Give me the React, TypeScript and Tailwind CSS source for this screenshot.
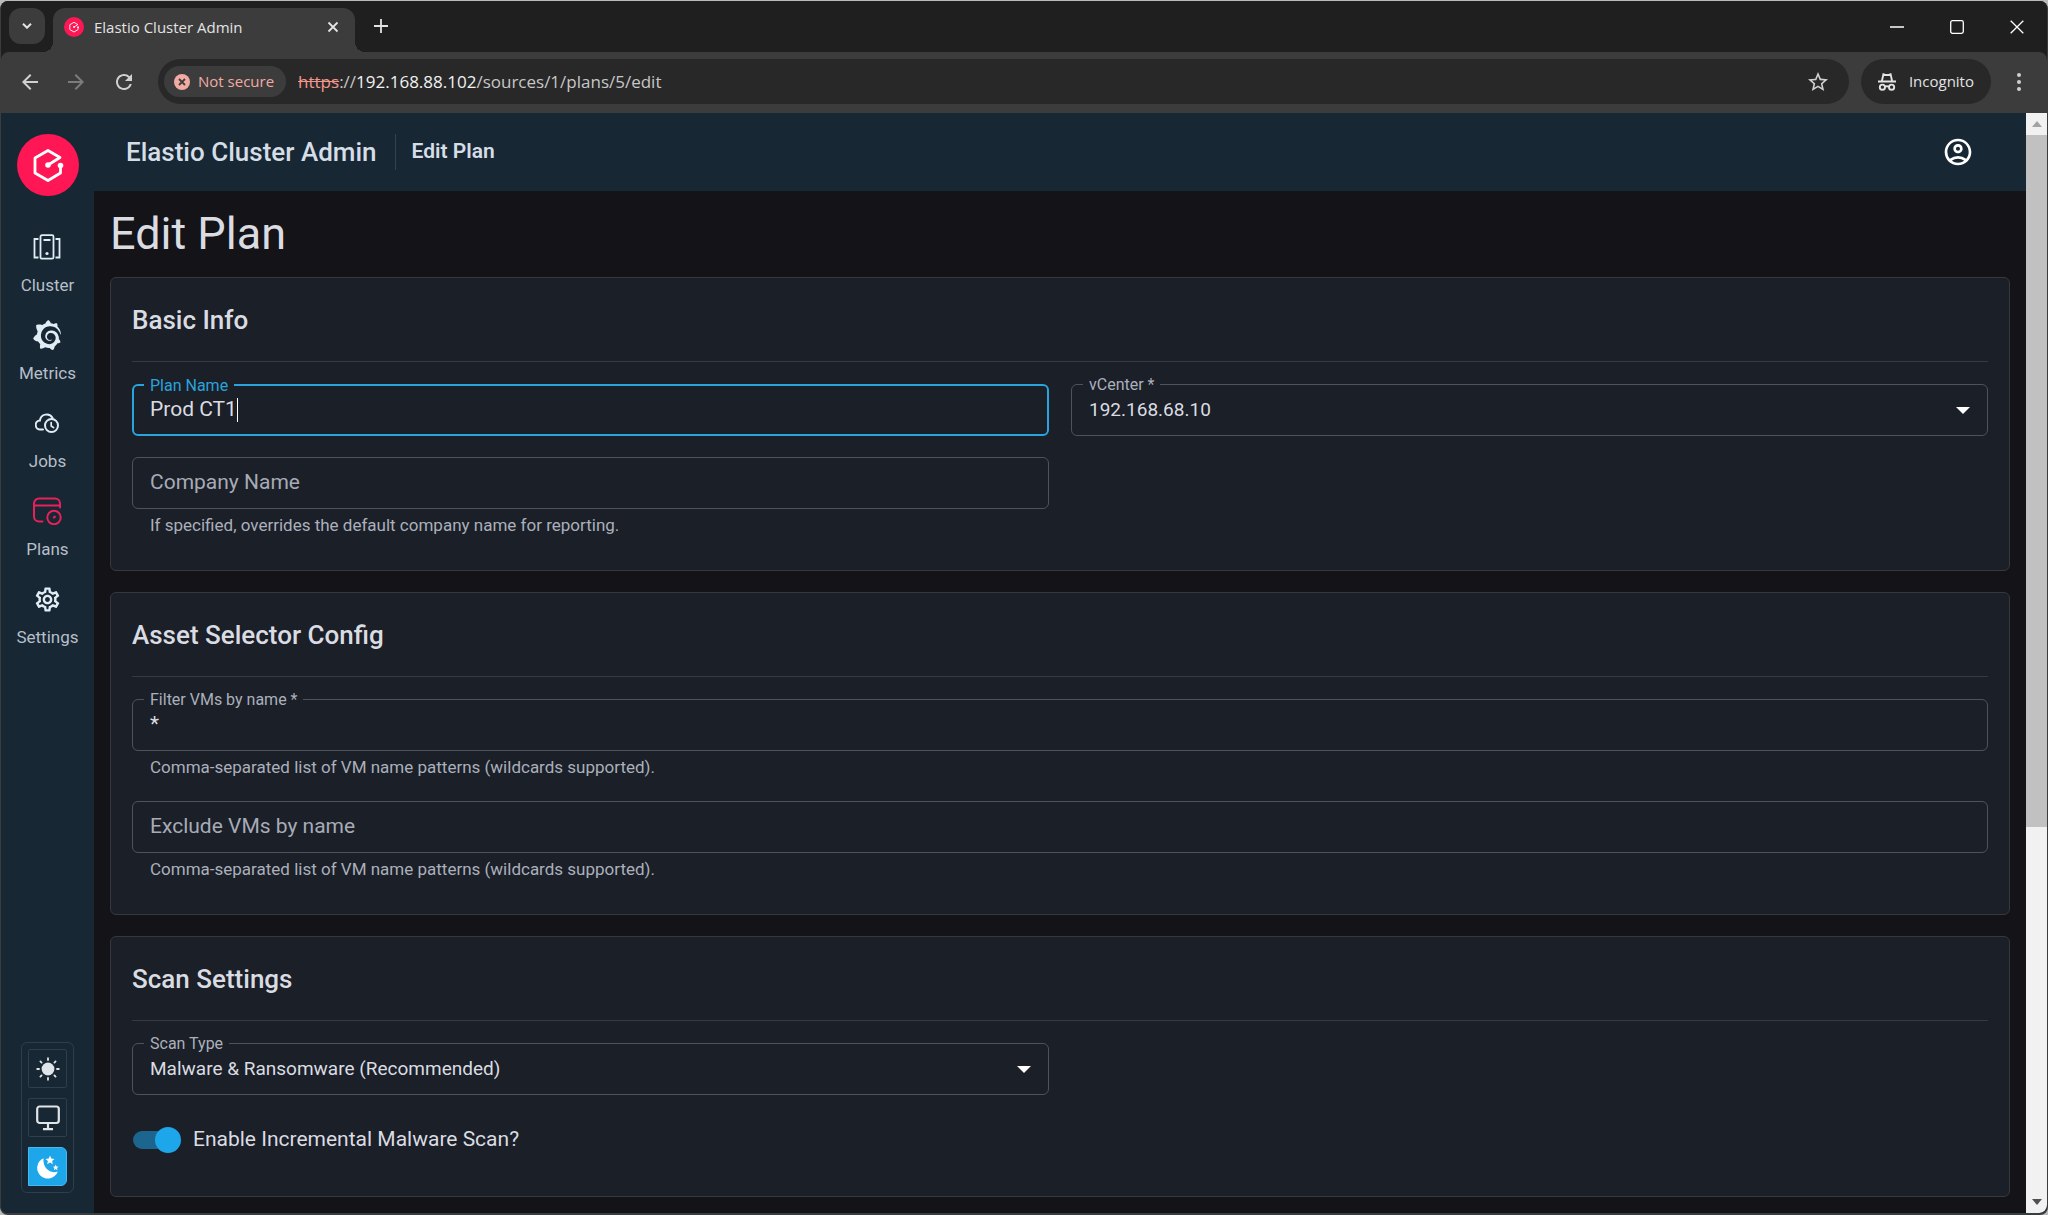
import React, { useState } from 'react';
import { MdArrowBack, MdArrowForward, MdOutlineAccountCircle, MdOutlineSettings, MdRefresh, MdStarOutline } from 'react-icons/md';
import { SiGrafana } from 'react-icons/si';

const LogoMark: React.FC<{ className?: string }> = ({ className }) => (
  <svg viewBox="0 0 62 62" className={className} fill="none" aria-hidden="true">
    <circle cx="31" cy="31" r="31" fill="#ff1654" />
    <path d="M31 31 L43 23.5 L31 16.5 L18 24 V39 L31 46.5 L43.5 39 V31.5" stroke="white" strokeWidth="2.8" strokeLinejoin="round" />
    <circle cx="31" cy="31" r="2.8" fill="white" />
    <circle cx="43.5" cy="31.5" r="2.8" fill="white" />
  </svg>
);

const ClusterIcon = () => (
  <svg viewBox="0 0 28 26" className="h-[26px] w-7" fill="none" stroke="currentColor" strokeWidth="1.8">
    <rect x="7.5" y="1.2" width="13" height="23.5" rx="1.5" />
    <path d="M10.5 6h7M5.5 5H1.5v18.5H5.5M22.5 5h4v18.5h-4" />
    <circle cx="14" cy="19.5" r="1.6" fill="currentColor" stroke="none" />
  </svg>
);

const JobsIcon = () => (
  <svg viewBox="0 0 24 20" className="h-5 w-6" fill="none" stroke="currentColor" strokeWidth="2" strokeLinecap="round">
    <path d="M8 16.5H5.5a4.5 4.5 0 0 1-.6-9A6.8 6.8 0 0 1 17.6 5" />
    <circle cx="16.5" cy="12.5" r="6.5" />
    <path d="M16.2 9.5v3.5l2.4 1.6" strokeWidth="1.7" />
  </svg>
);

const PlansIcon = () => (
  <svg viewBox="0 0 30 28" className="h-7 w-[30px]" fill="none" stroke="currentColor" strokeWidth="2" strokeLinecap="round">
    <path d="M10.5 24.5H7a5 5 0 0 1-5-5V6.5a5 5 0 0 1 5-5h16a5 5 0 0 1 5 5v4M2 8.5h26" />
    <circle cx="22" cy="20.5" r="6.7" />
    <path d="M22 20.5l.8-.8" strokeWidth="2.2" />
  </svg>
);

const SunIcon = () => (
  <svg viewBox="0 0 24 24" className="size-6" stroke="currentColor" strokeWidth="1.8" strokeLinecap="round">
    <circle cx="12" cy="12" r="6.4" fill="currentColor" stroke="none" />
    <path d="M12 1.2v1.8M12 21v1.8M1.2 12H3M21 12h1.8M4.4 4.4l1.2 1.2M18.4 18.4l1.2 1.2M4.4 19.6l1.2-1.2M18.4 5.6l1.2-1.2" />
  </svg>
);

const MonitorIcon = () => (
  <svg viewBox="0 0 24 26" className="h-[26px] w-6" fill="none" stroke="currentColor" strokeWidth="2.2">
    <rect x="1.2" y="1.5" width="21.6" height="16.5" rx="2.5" />
    <path d="M12 18v6M7 24.2h10" />
  </svg>
);

const MoonIcon = () => (
  <svg viewBox="0 0 24 24" className="size-6" fill="currentColor">
    <path d="M7.6 3.2A10.6 10.6 0 1 0 21.8 16.4C14 19.5 6.2 12.5 7.6 3.2Z" />
    <path d="M14 .6l1.3 3 3.2.3-2.4 2.2.7 3.2-2.8-1.7-2.8 1.7.7-3.2L9.5 3.9l3.2-.3Z" />
    <path d="M19.7 9.6l.8 1.9 2.1.2-1.6 1.4.5 2.1-1.8-1.1-1.8 1.1.5-2.1-1.6-1.4 2.1-.2Z" />
  </svg>
);

const IncognitoIcon = () => (
  <svg viewBox="0 0 20 20" className="size-5" fill="none" stroke="#e3e3e3" strokeWidth="1.9">
    <path d="M1 9.5h18M4.8 9.5l1.6-7.2 1.8.7h3.6l1.8-.7 1.6 7.2" />
    <circle cx="5.4" cy="15.2" r="2.6" />
    <circle cx="14.6" cy="15.2" r="2.6" />
    <path d="M8 14.8q2-1.2 4 0" />
  </svg>
);

const NAV_ITEMS = [
  { label: 'Cluster', icon: <ClusterIcon /> },
  { label: 'Metrics', icon: <SiGrafana size={30} /> },
  { label: 'Jobs', icon: <JobsIcon /> },
  { label: 'Plans', icon: <PlansIcon />, active: true },
  { label: 'Settings', icon: <MdOutlineSettings size={29} /> },
];

const THEMES = [
  { id: 'light', label: 'Light theme', icon: <SunIcon /> },
  { id: 'system', label: 'System theme', icon: <MonitorIcon /> },
  { id: 'dark', label: 'Dark theme', icon: <MoonIcon /> },
];

const TabStrip = () => (
  <div className="flex h-[51px] shrink-0 items-end bg-[#1f1f1f] pl-2 text-[#e3e3e3]">
    <button aria-label="Search tabs" className="mb-2 flex size-9 items-center justify-center rounded-xl bg-[#3c3c3c]">
      <svg viewBox="0 0 10 6" className="h-1.5 w-2.5" fill="none" stroke="currentColor" strokeWidth="2"><path d="M1 .7l4 4 4-4" /></svg>
    </button>
    <div className="relative ml-2 flex h-11 w-[302px] items-center rounded-t-xl bg-[#3c3c3c] pb-1.5 pl-[11px] pr-3 before:absolute before:bottom-0 before:-left-2.5 before:size-2.5 before:bg-[radial-gradient(circle_at_0_0,transparent_10px,#3c3c3c_10px)] after:absolute after:bottom-0 after:-right-2.5 after:size-2.5 after:bg-[radial-gradient(circle_at_100%_0,transparent_10px,#3c3c3c_10px)]">
      <LogoMark className="size-5" />
      <span className="ml-2.5 flex-1 whitespace-nowrap text-[15px]">Elastio Cluster Admin</span>
      <button aria-label="Close tab" className="flex size-5 items-center justify-center">
        <svg viewBox="0 0 12 12" className="size-3" stroke="currentColor" strokeWidth="1.8"><path d="M1.5 1.5l9 9M10.5 1.5l-9 9" /></svg>
      </button>
    </div>
    <button aria-label="New tab" className="mb-2 ml-2 flex size-9 items-center justify-center">
      <svg viewBox="0 0 14 14" className="size-3.5" stroke="currentColor" strokeWidth="1.8"><path d="M7 0v14M0 7h14" /></svg>
    </button>
    <div className="mb-[5px] ml-auto flex text-white">
      <button aria-label="Minimize" className="flex h-10 w-[60px] items-center justify-center">
        <svg viewBox="0 0 14 14" className="size-3.5" stroke="currentColor" strokeWidth="1.3"><path d="M0 7h14" /></svg>
      </button>
      <button aria-label="Maximize" className="flex h-10 w-[60px] items-center justify-center">
        <svg viewBox="0 0 14 14" className="size-3.5" fill="none" stroke="currentColor" strokeWidth="1.3"><rect x=".7" y=".7" width="12.6" height="12.6" rx="1.8" /></svg>
      </button>
      <button aria-label="Close window" className="flex h-10 w-[60px] items-center justify-center">
        <svg viewBox="0 0 14 14" className="size-3.5" stroke="currentColor" strokeWidth="1.3"><path d="M.7.7l12.6 12.6M13.3.7L.7 13.3" /></svg>
      </button>
    </div>
  </div>
);

const Toolbar = () => (
  <div className="shrink-0 bg-[#1f1f1f]">
    <div className="flex h-[61px] items-center rounded-t-lg bg-[#3c3c3c] pb-0.5 pl-[17px] text-[#d0d0d0]">
      <button aria-label="Back" className="mr-[22px]"><MdArrowBack size={24} /></button>
      <button aria-label="Forward" className="mr-6 text-[#7c7c7c]"><MdArrowForward size={24} /></button>
      <button aria-label="Reload"><MdRefresh size={24} /></button>
      <div className="ml-[22px] flex h-[45px] flex-1 items-center rounded-full bg-[#282828] pl-1.5 pr-[19px]">
        <button className="flex h-[31px] items-center rounded-full bg-[#3c3c3c] pl-2.5 pr-3 text-[15px] text-[#f2aba3]">
          <svg viewBox="0 0 16 16" className="mr-2 size-4"><circle cx="8" cy="8" r="8" fill="#f2aba3" /><path d="M5 5l6 6M11 5l-6 6" stroke="#3c3c3c" strokeWidth="1.8" /></svg>
          Not secure
        </button>
        <div className="ml-3 whitespace-nowrap text-[17px] text-[#c7c7c7]">
          <span className="text-[#f2968b] line-through">https</span>://<span className="text-[#f1f1f1]">192.168.88.102</span>/sources/1/plans/5/edit
        </div>
        <button aria-label="Bookmark this tab" className="ml-auto"><MdStarOutline size={24} /></button>
      </div>
      <button className="ml-3 flex h-[45px] items-center rounded-full bg-[#282828] pl-4 pr-[17px] text-[15px] text-[#e3e3e3]">
        <IncognitoIcon />
        <span className="ml-3">Incognito</span>
      </button>
      <button aria-label="Menu" className="mx-[18px] flex h-10 w-5 items-center justify-center">
        <svg viewBox="0 0 4 20" className="h-5 w-1" fill="currentColor"><circle cx="2" cy="3" r="2" /><circle cx="2" cy="10" r="2" /><circle cx="2" cy="17" r="2" /></svg>
      </button>
    </div>
  </div>
);

const Sidebar = () => {
  const [theme, setTheme] = useState('dark');

  return (
    <aside className="flex w-[93px] shrink-0 flex-col items-center bg-[#172734] pb-5 pt-[21px]">
      <a href="#" aria-label="Home"><LogoMark className="size-[62px]" /></a>
      <nav className="mt-[35px] flex flex-col gap-[22px]">
        {NAV_ITEMS.map((item) => (
          <a key={item.label} href="#" className="flex flex-col items-center gap-2.5">
            <span className={item.active ? 'flex h-8 items-center text-[#e8215a]' : 'flex h-8 items-center text-[#e1edf5]'}>{item.icon}</span>
            <span className="text-[17px] leading-6 text-[#b7bfc8]">{item.label}</span>
          </a>
        ))}
      </nav>
      <div className="mt-auto flex flex-col gap-2.5 rounded-md border border-[#2f3e4b] p-1.5">
        {THEMES.map((t) => (
          <button
            key={t.id}
            aria-label={t.label}
            onClick={() => setTheme(t.id)}
            className={
              theme === t.id
                ? 'flex size-[39px] items-center justify-center rounded-r-md border border-[#48b8f0] bg-[#1da7ea] text-white'
                : 'flex size-[39px] items-center justify-center rounded-xs border border-[#2f3e4b] text-[#dfe5e8]'
            }
          >
            {t.icon}
          </button>
        ))}
      </div>
    </aside>
  );
};

interface CardProps {
  title: string;
  children: React.ReactNode;
}

const Card: React.FC<CardProps> = ({ title, children }) => (
  <section className="rounded-md border border-[#36383f] bg-[#1a1f28] px-[21px] pb-8">
    <h2 className="border-b border-[#363a42] pb-[25px] pt-[26px] text-[26px] font-medium leading-8">{title}</h2>
    <div className="mt-[22px] flex flex-col gap-[21px]">{children}</div>
  </section>
);

interface FieldProps {
  id: string;
  label: string;
  helper?: string;
  floating?: boolean;
  focused?: boolean;
  children: React.ReactNode;
}

const Field: React.FC<FieldProps> = ({ id, label, helper, floating, focused, children }) => (
  <div>
    <div
      className={
        focused
          ? 'relative flex h-[52px] items-center rounded-md border-2 border-[#2ba3dc] px-4'
          : 'relative flex h-[52px] items-center rounded-md border border-[#4e525b] px-[17px]'
      }
    >
      {floating ? (
        <label
          htmlFor={id}
          className={
            focused
              ? 'absolute -top-3 left-2.5 bg-[#1a1f28] px-1.5 text-base leading-6 text-[#2ba3dc]'
              : 'absolute -top-3 left-[11px] bg-[#1a1f28] px-1.5 text-base leading-6 text-[#abb0bb]'
          }
        >
          {label}
        </label>
      ) : (
        <label htmlFor={id} className="pointer-events-none absolute left-[17px] text-[21px] text-[#a7abb6]">{label}</label>
      )}
      {children}
    </div>
    {helper && <p className="mt-1 pl-[18px] text-[17px] leading-[25px] text-[#abb0bb]">{helper}</p>}
  </div>
);

const DropArrow = () => (
  <svg viewBox="0 0 14 7" className="pointer-events-none absolute right-[17px] h-[7px] w-3.5" fill="white"><path d="M0 0h14L7 7Z" /></svg>
);

const Scrollbar = () => (
  <div className="flex w-[21px] shrink-0 flex-col rounded-br-lg bg-[#f1f1f1]" aria-hidden="true">
    <div className="flex h-[22px] items-center justify-center">
      <svg viewBox="0 0 10 6" className="h-1.5 w-2.5" fill="#a3a3a3"><path d="M0 6h10L5 0Z" /></svg>
    </div>
    <div className="min-h-0 flex-1">
      <div className="h-[65.5%] bg-[#c1c1c1]" />
    </div>
    <div className="flex h-[22px] items-center justify-center">
      <svg viewBox="0 0 10 6" className="h-1.5 w-2.5" fill="#505050"><path d="M0 0h10L5 6Z" /></svg>
    </div>
  </div>
);

const EditPlan = () => {
  const [planName, setPlanName] = useState('Prod CT1');
  const [filter, setFilter] = useState('*');
  const [incremental, setIncremental] = useState(true);

  return (
    <main className="min-h-0 flex-1 overflow-hidden bg-[#131318] px-4 text-[#dadce2]">
      <h1 className="py-4 text-[45px] leading-[54px]">Edit Plan</h1>
      <form className="flex flex-col gap-[21px] pb-4">
        <Card title="Basic Info">
          <div className="grid grid-cols-2 gap-x-[22px] gap-y-[21px]">
            <Field id="plan-name" label="Plan Name" floating focused>
              <input id="plan-name" value={planName} onChange={(e) => setPlanName(e.target.value)} className="w-full bg-transparent text-[21px] caret-transparent outline-none" />
              <span className="absolute left-[103px] h-6 w-px bg-white" />
            </Field>
            <Field id="vcenter" label="vCenter *" floating>
              <select id="vcenter" className="w-full appearance-none bg-transparent text-[19px] outline-none">
                <option>192.168.68.10</option>
              </select>
              <DropArrow />
            </Field>
            <Field id="company" label="Company Name" helper="If specified, overrides the default company name for reporting.">
              <input id="company" className="w-full bg-transparent text-[21px] outline-none" />
            </Field>
          </div>
        </Card>

        <Card title="Asset Selector Config">
          <Field id="filter" label="Filter VMs by name *" floating helper="Comma-separated list of VM name patterns (wildcards supported).">
            <input id="filter" value={filter} onChange={(e) => setFilter(e.target.value)} className="w-full bg-transparent text-[21px] outline-none" />
          </Field>
          <Field id="exclude" label="Exclude VMs by name" helper="Comma-separated list of VM name patterns (wildcards supported).">
            <input id="exclude" className="w-full bg-transparent text-[21px] outline-none" />
          </Field>
        </Card>

        <Card title="Scan Settings">
          <div className="grid grid-cols-2 gap-x-[22px]">
            <Field id="scan-type" label="Scan Type" floating>
              <select id="scan-type" className="w-full appearance-none bg-transparent text-[19px] outline-none">
                <option>Malware &amp; Ransomware (Recommended)</option>
              </select>
              <DropArrow />
            </Field>
          </div>
          <div className="flex h-12 items-center">
            <input
              id="incremental"
              type="checkbox"
              role="switch"
              checked={incremental}
              onChange={(e) => setIncremental(e.target.checked)}
              className="relative ml-px h-[18px] w-11 appearance-none rounded-full bg-[#44474f] before:absolute before:-left-1 before:-top-1 before:size-[26px] before:rounded-full before:bg-[#9a9da6] checked:bg-[#1c658f] checked:before:left-[22px] checked:before:bg-[#1da7ea]"
            />
            <label htmlFor="incremental" className="ml-4 text-[21px]">Enable Incremental Malware Scan?</label>
          </div>
        </Card>
      </form>
    </main>
  );
};

const App = () => (
  <div className="h-screen bg-[#b9bdb9] pt-px font-['Roboto',sans-serif]">
    <div className="flex h-full flex-col overflow-hidden rounded-lg border-x border-b-2 border-[#3a3d40] bg-[#1f1f1f]">
      <div className="font-['Open_Sans','Noto_Sans',sans-serif]">
        <TabStrip />
        <Toolbar />
      </div>
      <div className="flex min-h-0 flex-1">
        <Sidebar />
        <div className="flex min-w-0 flex-1 flex-col">
          <header className="flex h-[78px] shrink-0 items-center bg-[#172734] pl-8 pr-[52px] text-[#d5dde6]">
            <span className="text-[26px] font-medium">Elastio Cluster Admin</span>
            <span className="ml-[18px] h-9 w-px bg-[#33424f]" />
            <span className="ml-4 text-[21px] font-semibold">Edit Plan</span>
            <button aria-label="Account" className="ml-auto text-white"><MdOutlineAccountCircle size={32} /></button>
          </header>
          <EditPlan />
        </div>
        <Scrollbar />
      </div>
    </div>
  </div>
);

export default App;
